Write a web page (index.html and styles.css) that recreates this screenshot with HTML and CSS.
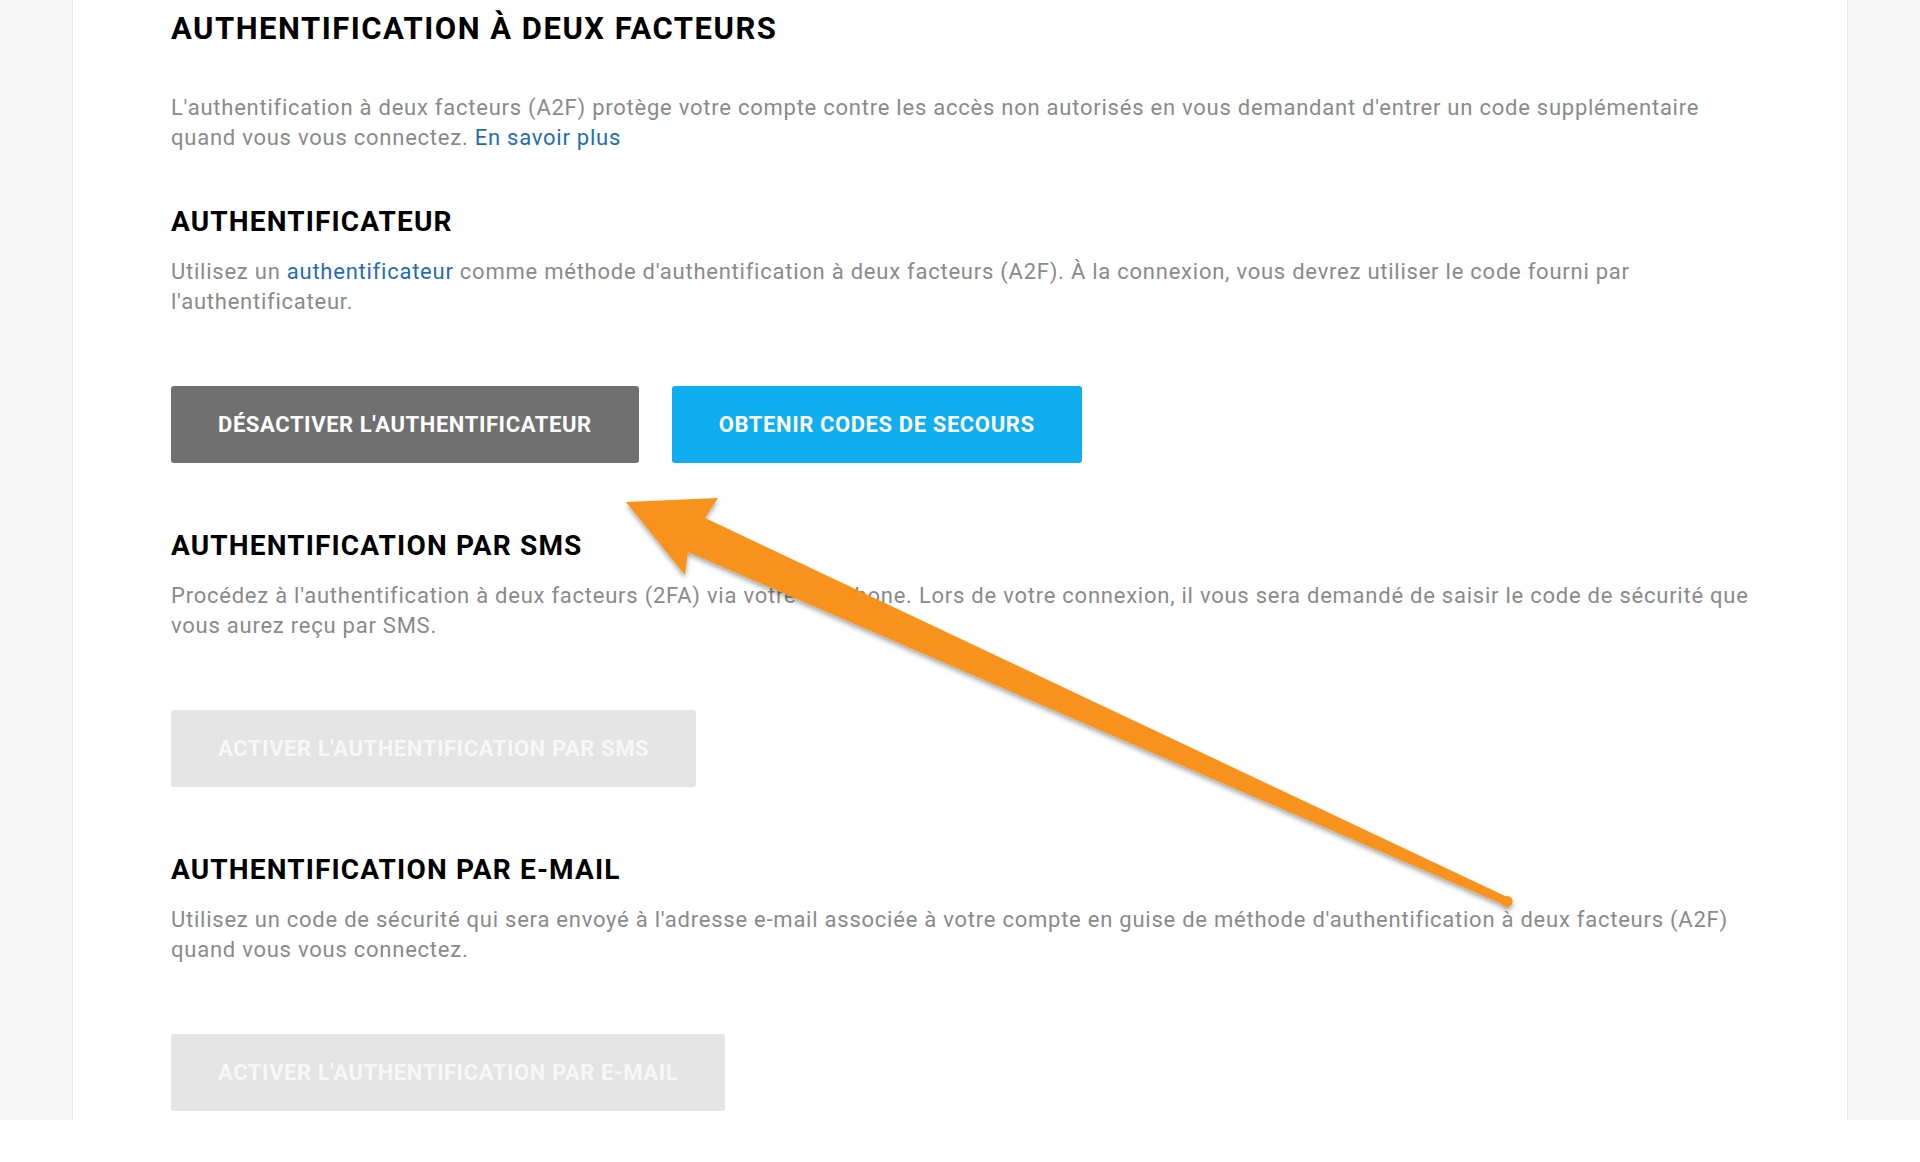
FILE: index.html
```html
<!DOCTYPE html>
<html lang="fr">
<head>
    <meta charset="UTF-8">
    <meta name="viewport" content="width=device-width, initial-scale=1.0">
    <title>Authentification à deux facteurs</title>
    <link rel="stylesheet" href="styles.css">
</head>
<body>
    <div class="page">
        <main class="panel">
            <section class="intro">
                <h1>AUTHENTIFICATION À DEUX FACTEURS</h1>
                <p>L'authentification à deux facteurs (A2F) protège votre compte contre les accès non autorisés en vous demandant d'entrer un code supplémentaire quand vous vous connectez. <a href="#">En savoir plus</a></p>
            </section>

            <section class="method">
                <h2>AUTHENTIFICATEUR</h2>
                <p>Utilisez un <a href="#">authentificateur</a> comme méthode d'authentification à deux facteurs (A2F). À la connexion, vous devrez utiliser le code fourni par l'authentificateur.</p>
                <div class="actions">
                    <button class="btn btn-dark">DÉSACTIVER L'AUTHENTIFICATEUR</button>
                    <button class="btn btn-primary">OBTENIR CODES DE SECOURS</button>
                </div>
            </section>

            <section class="method">
                <h2>AUTHENTIFICATION PAR SMS</h2>
                <p>Procédez à l'authentification à deux facteurs (2FA) via votre téléphone. Lors de votre connexion, il vous sera demandé de saisir le code de sécurité que vous aurez reçu par SMS.</p>
                <div class="actions">
                    <button class="btn btn-disabled" disabled>ACTIVER L'AUTHENTIFICATION PAR SMS</button>
                </div>
            </section>

            <section class="method">
                <h2>AUTHENTIFICATION PAR E-MAIL</h2>
                <p>Utilisez un code de sécurité qui sera envoyé à l'adresse e-mail associée à votre compte en guise de méthode d'authentification à deux facteurs (A2F) quand vous vous connectez.</p>
                <div class="actions">
                    <button class="btn btn-disabled" disabled>ACTIVER L'AUTHENTIFICATION PAR E-MAIL</button>
                </div>
            </section>
        </main>

        <!-- annotation arrow drawn over the page -->
        <svg class="arrow" width="1920" height="1120" viewBox="0 0 1920 1120">
            <defs>
                <filter id="arrowShadow" x="-5%" y="-5%" width="110%" height="115%">
                    <feDropShadow dx="0" dy="3" stdDeviation="2.5" flood-color="#000" flood-opacity="0.35"/>
                </filter>
            </defs>
            <g filter="url(#arrowShadow)" fill="#f7931e">
                <polygon points="626,502 718,498 705,518 1505,896 1509,907 688,552 685,575"/>
                <circle cx="1507" cy="901.5" r="5.6"/>
            </g>
        </svg>
    </div>
</body>
</html>
```

FILE: styles.css
```css
body {
    margin: 0;
    background: #fff;
    font-family: Roboto, "Liberation Sans", Arial, sans-serif;
}

.page {
    position: relative;
    height: 1120px;
    background: #f7f7f7;
    overflow: hidden;
}

.panel {
    margin-left: 72px;
    width: 1776px;
    height: 100%;
    box-sizing: border-box;
    padding: 11px 90px 0 98px;
    background: #fff;
    border-left: 1px solid #e8e8e8;
    border-right: 1px solid #e8e8e8;
}

h1, h2 {
    margin: 0;
    color: #000;
    font-weight: 700;
}

h1 {
    font-size: 31px;
    line-height: 36px;
    letter-spacing: 1.5px;
}

h2 {
    font-size: 28px;
    line-height: 34px;
    letter-spacing: 1.15px;
}

p {
    margin: 0;
    color: #8a8a8a;
    font-size: 22px;
    line-height: 30px;
    letter-spacing: 0.76px;
}

.intro p { margin-top: 46px; }
.intro + .method { margin-top: 52px; }
.method + .method { margin-top: 66px; }
.method p { margin-top: 18px; }

a {
    color: #1f6db4;
    text-decoration: none;
}

.actions {
    display: flex;
    gap: 33px;
    margin-top: 69px;
}

.btn {
    height: 77px;
    padding: 0 47px;
    border: none;
    border-radius: 3px;
    color: #fff;
    font-family: inherit;
    font-size: 22px;
    font-weight: 700;
    letter-spacing: 0.6px;
    cursor: pointer;
}

.btn-dark { background: #707070; }
.btn-primary { background: #0eaef0; }
.btn-disabled {
    background: #e4e4e4;
    color: #f7f7f7;
    cursor: default;
}

.arrow {
    position: absolute;
    top: 0;
    left: 0;
    pointer-events: none;
}
```
